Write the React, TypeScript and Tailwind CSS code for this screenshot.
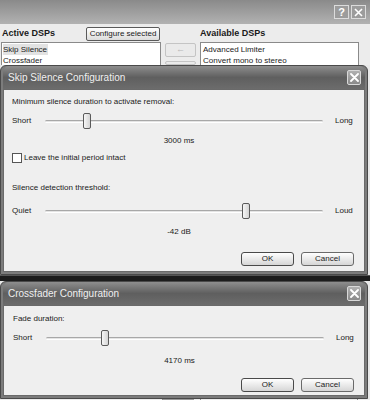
import React from "react";

const font = { fontFamily: '"Liberation Sans", Arial, sans-serif' };

function Slider({ min, max, thumb }: { min: string; max: string; thumb: number }) {
  return (
    <div className="flex items-center h-[16px]">
      <div className="w-[33px]">{min}</div>
      <div className="relative w-[278px] h-[16px] flex items-center">
        <div className="w-full h-[3px] rounded-full border-t border-[#a8a8a8] bg-[#e4e4e4] border-b border-b-white" />
        <div
          className="absolute top-0 w-[8px] h-[16px] rounded-[2px] border border-[#5a5a5a] bg-gradient-to-r from-[#f6f6f6] to-[#d4d4d4]"
          style={{ left: thumb }}
        />
      </div>
      <div className="ml-[12px]">{max}</div>
    </div>
  );
}

function Buttons() {
  return (
    <div className="flex justify-end gap-[7px] pr-[10px]">
      <div className="w-[53px] h-[14px] flex items-center justify-center rounded-[3px] border border-[#4a4a4a] bg-gradient-to-b from-white to-[#d6d6d6] text-[8px]">
        OK
      </div>
      <div className="w-[53px] h-[14px] flex items-center justify-center rounded-[3px] border border-[#6a6a6a] bg-gradient-to-b from-white to-[#d6d6d6] text-[8px]">
        Cancel
      </div>
    </div>
  );
}

function TitleBar({ title }: { title: string }) {
  return (
    <div className="h-[23px] flex items-center justify-between pl-[3px] pr-[4px] rounded-t-[6px] bg-gradient-to-b from-[#8e8e8e] via-[#5f5f5f] to-[#6c6c6c]">
      <span className="text-[10px] text-[#f0f0f0] pl-[2px]">{title}</span>
      <div className="w-[14px] h-[15px] rounded-[2px] border border-[#d8d8d8] bg-gradient-to-b from-[#b0b0b0] to-[#8a8a8a] flex items-center justify-center">
        <svg width="9" height="9" viewBox="0 0 9 9">
          <path d="M1 1 L8 8 M8 1 L1 8" stroke="white" strokeWidth="1.8" strokeLinecap="round" />
        </svg>
      </div>
    </div>
  );
}

export default function App() {
  return (
    <div className="w-[370px] h-[400px] overflow-hidden bg-[#e8e8e8] text-[#1a1a1a] flex flex-col" style={font}>
      {/* background window */}
      <div className="h-[24px] shrink-0 bg-gradient-to-b from-[#8a8a8a] to-[#b2b2b2] flex justify-end items-start pt-[5px] pr-[4px] gap-[2px]">
        <div className="w-[15px] h-[14px] border border-[#dcdcdc] bg-[#9c9c9c] text-white text-[11px] leading-[12px] text-center font-bold">?</div>
        <div className="w-[15px] h-[14px] border border-[#dcdcdc] bg-[#9c9c9c] flex items-center justify-center">
          <svg width="9" height="9" viewBox="0 0 9 9">
            <path d="M1 1 L8 8 M8 1 L1 8" stroke="white" strokeWidth="1.6" />
          </svg>
        </div>
      </div>
      <div className="h-[41px] shrink-0 overflow-hidden flex pl-[1px] pt-[3px] bg-[#ececec]">
        <div className="w-[160px] flex flex-col">
          <div className="flex items-center justify-between h-[14px]">
            <span className="text-[9px] font-bold pl-[1px]">Active DSPs</span>
            <div className="w-[74px] h-[14px] mr-[1px] border border-[#5a5a5a] rounded-[2px] bg-gradient-to-b from-white to-[#dcdcdc] text-[8px] flex items-center justify-center">
              Configure selected
            </div>
          </div>
          <div className="mt-[1px] h-[40px] bg-white border border-[#8a8a8a] text-[8px] leading-[11px] pt-[1px] pl-[1px]">
            <div className="bg-[#e2e2e2] w-fit pr-[1px]">Skip Silence</div>
            <div>Crossfader</div>
          </div>
        </div>
        <div className="w-[31px] ml-[4px] pt-[16px] flex flex-col gap-[4px]">
          <div className="h-[14px] border border-[#c4c4c4] bg-[#eaeaea] rounded-[2px] flex items-center justify-center text-[#b8b8b8] text-[9px]">←</div>
          <div className="h-[14px] border border-[#c4c4c4] bg-[#eaeaea] rounded-[2px]" />
        </div>
        <div className="w-[159px] ml-[4px] flex flex-col">
          <div className="h-[14px] flex items-center text-[9px] font-bold">Available DSPs</div>
          <div className="mt-[1px] h-[40px] bg-white border border-[#8a8a8a] text-[8px] leading-[11px] pt-[1px] pl-[2px]">
            <div>Advanced Limiter</div>
            <div>Convert mono to stereo</div>
          </div>
        </div>
      </div>

      {/* Skip Silence dialog */}
      <div className="w-[368px] shrink-0 rounded-t-[6px] border border-[#4a4a4a] bg-[#7c7c7c] px-[2px] pb-[2px]">
        <TitleBar title="Skip Silence Configuration" />
        <div className="h-[183px] bg-[#efefef] border border-[#6a6a6a] text-[8px] pl-[8px] flex flex-col">
          <div className="mt-[7px] h-[10px] leading-[10px]">Minimum silence duration to activate removal:</div>
          <div className="mt-[6px]">
            <Slider min="Short" max="Long" thumb={38} />
          </div>
          <div className="mt-[7px] h-[10px] leading-[10px] text-center pr-[18px]">3000 ms</div>
          <div className="mt-[7px] flex items-center gap-[2px] h-[10px]">
            <div className="w-[10px] h-[10px] border border-[#555] bg-white" />
            <span>Leave the initial period intact</span>
          </div>
          <div className="mt-[20px] h-[10px] leading-[10px]">Silence detection threshold:</div>
          <div className="mt-[10px]">
            <Slider min="Quiet" max="Loud" thumb={197} />
          </div>
          <div className="mt-[8px] h-[10px] leading-[10px] text-center pr-[18px]">-42 dB</div>
          <div className="mt-[15px]">
            <Buttons />
          </div>
        </div>
      </div>

      {/* gap showing background */}
      <div className="h-[6px] shrink-0 bg-[#1c1c1c] border-t border-[#555]" />

      {/* Crossfader dialog */}
      <div className="w-[368px] shrink-0 rounded-t-[6px] border border-[#4a4a4a] bg-[#7c7c7c] px-[2px] pb-[2px]">
        <TitleBar title="Crossfader Configuration" />
        <div className="h-[91px] bg-[#efefef] border border-[#6a6a6a] text-[8px] pl-[9px] flex flex-col">
          <div className="mt-[8px] h-[10px] leading-[10px]">Fade duration:</div>
          <div className="mt-[6px]">
            <Slider min="Short" max="Long" thumb={55} />
          </div>
          <div className="mt-[10px] h-[10px] leading-[10px] text-center pr-[18px]">4170 ms</div>
          <div className="mt-[12px]">
            <Buttons />
          </div>
        </div>
      </div>

      {/* bottom of background window */}
      <div className="flex-1 bg-[#ececec] flex">
        <div className="w-[163px] border-r border-[#8a8a8a]" />
        <div className="w-[31px] bg-[#9a9a9a]" />
        <div className="w-[6px]" />
        <div className="w-[158px] border-l border-r border-[#8a8a8a]" />
      </div>
    </div>
  );
}
